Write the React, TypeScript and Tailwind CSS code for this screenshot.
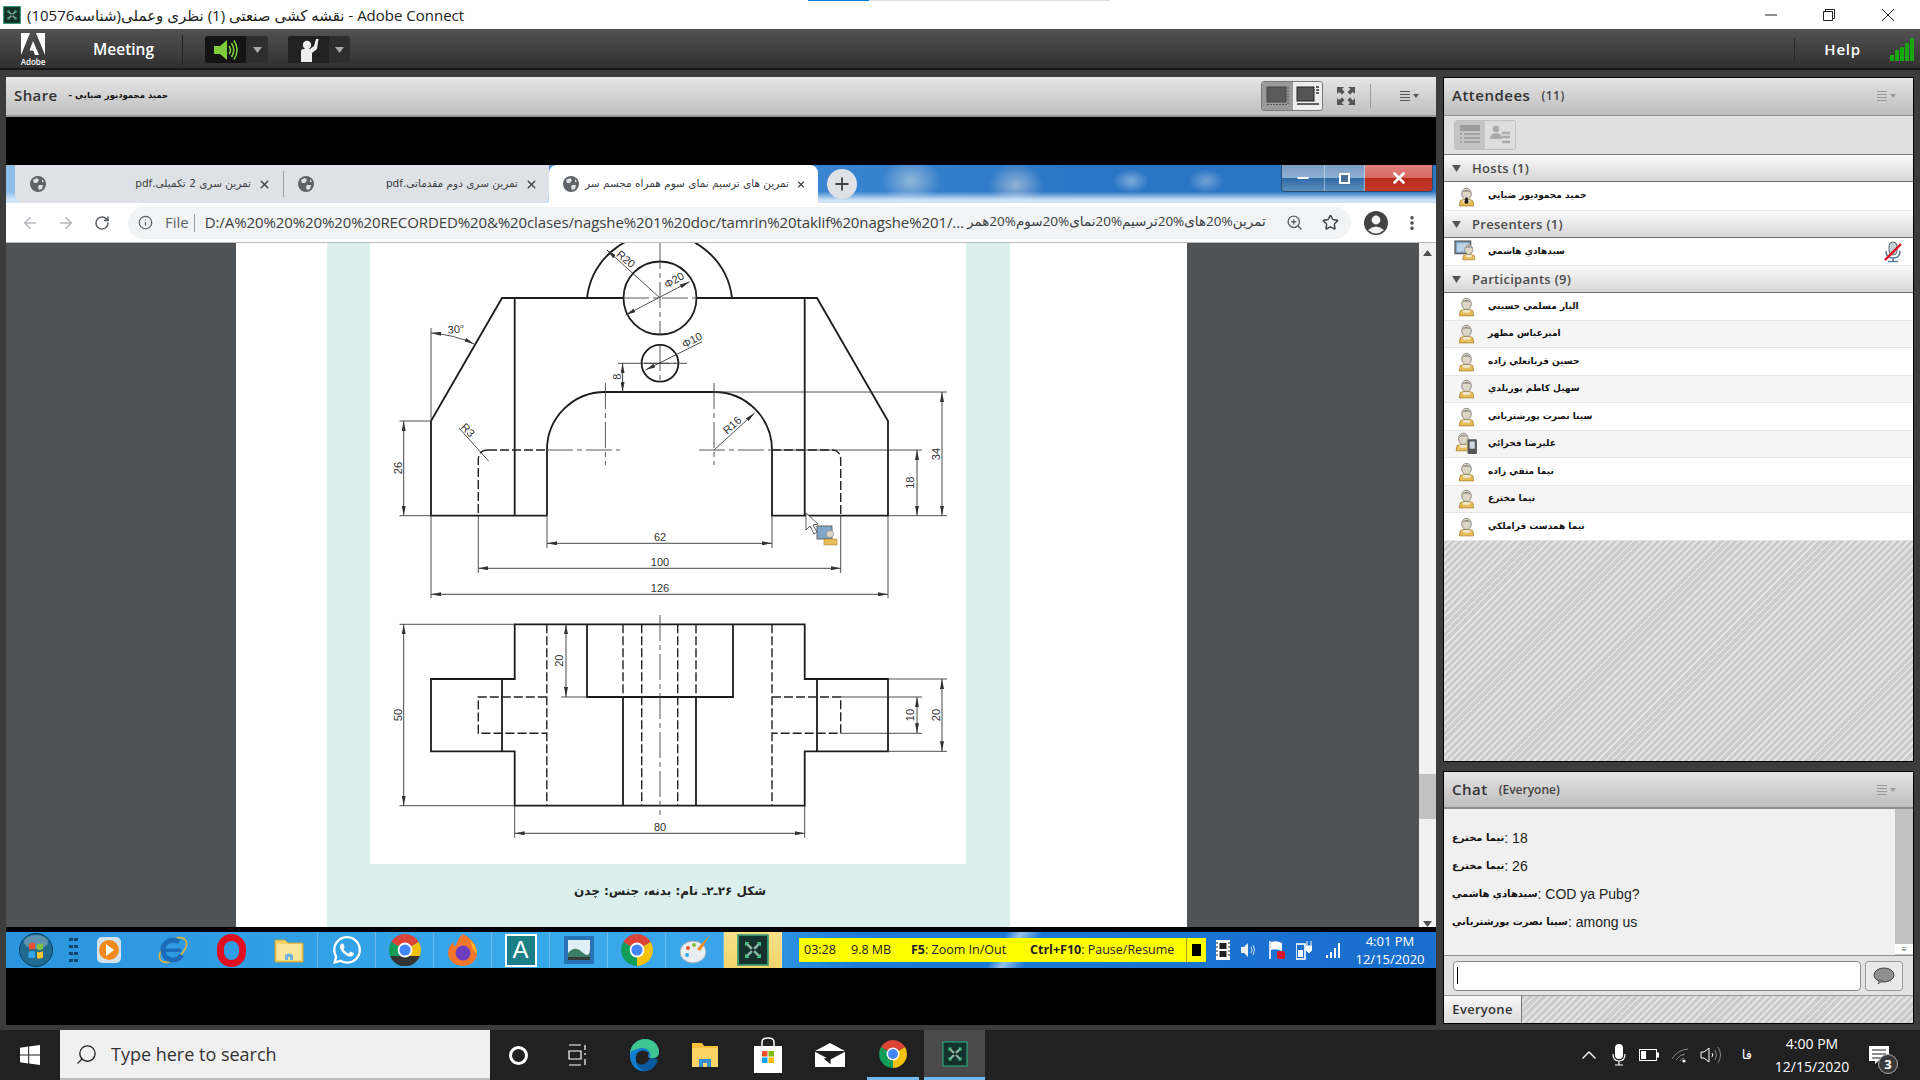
import React from "react";
import { FaWhatsapp } from "react-icons/fa";
import { ArrowLeft, ArrowRight, RotateCw, Info, ZoomIn, Star, X, Plus, ChevronUp, Search, MoreVertical, Minus } from "lucide-react";

const sans = "font-['Open_Sans','DejaVu_Sans',sans-serif]";
const ar = "font-['DejaVu_Sans',sans-serif]";
const arial = "font-['Liberation_Sans','DejaVu_Sans',sans-serif]";
const hatch = "bg-[repeating-linear-gradient(135deg,#cbcbcb_0,#cbcbcb_3px,#e4e4e4_3px,#e4e4e4_5px)]";

function Globe() {
  return (
    <svg width="16" height="16" viewBox="0 0 16 16" className="shrink-0">
      <circle cx="8" cy="8" r="8" fill="#5f6368" />
      <path d="M3 4 L7 2 L9 4 L7 7 L4 7 Z M9 9 L13 9 L12 13 L9 14 L8 11 Z M12 3 L14 6 L12 6 Z" fill="#dee1e6" />
    </svg>
  );
}

function MenuGlyph({ color = "#9a9a9a" }: { color?: string }) {
  return (
    <svg width="20" height="10" viewBox="0 0 20 10" className="shrink-0">
      <path d="M0 .5H10M0 3.5H10M0 6.5H10M0 9.5H10" stroke={color} strokeWidth="1" />
      <path d="M13 3H19L16 7Z" fill={color} />
    </svg>
  );
}

function Person({ kind = "user" }: { kind?: "user" | "host" | "presenter" | "mobile" }) {
  const body = (
    <g>
      <path d="M5 20 L6 15 Q12 12 18 15 L19 20 Z" fill="#e8bc57" stroke="#a37a28" strokeWidth=".7" />
      <path d="M8 15 Q12 13 16 15 L15 17 L9 17 Z" fill="#efe6d0" />
      <ellipse cx="12" cy="8.5" rx="4.6" ry="5.4" fill="#ddd6c6" stroke="#7d7a72" strokeWidth=".8" />
      <path d="M7.8 7 Q12 2 16.2 7 Q12 5.2 7.8 7" fill="#8f8a80" />
    </g>
  );
  if (kind === "host")
    return (
      <svg width="25" height="23" viewBox="0 0 24 22" className="shrink-0">
        {body}
        <path d="M11 12 L13 12 L13.5 17 L10.5 17Z" fill="#111" />
        <circle cx="12" cy="16" r="2" fill="#222" />
      </svg>
    );
  if (kind === "presenter")
    return (
      <svg width="25" height="23" viewBox="0 0 24 22" className="shrink-0">
        <rect x="1" y="1" width="15" height="12" fill="#7fa5c9" stroke="#555" strokeWidth="1.2" />
        <rect x="3" y="3" width="11" height="8" fill="#bcd5e8" />
        <g transform="translate(4 2) scale(.85)">{body}</g>
      </svg>
    );
  if (kind === "mobile")
    return (
      <svg width="25" height="23" viewBox="0 0 24 22" className="shrink-0">
        <g transform="translate(-3 -2)">{body}</g>
        <rect x="13" y="7" width="9" height="14" rx="1" fill="#555" />
        <rect x="15" y="9" width="5" height="7" fill="#cfd8de" />
      </svg>
    );
  return (
    <svg width="25" height="23" viewBox="0 0 24 22" className="shrink-0">
      {body}
    </svg>
  );
}

function Section({ label }: { label: string }) {
  return (
    <div className="flex h-[27px] shrink-0 items-center border-b border-[#6e6e6e] bg-[linear-gradient(180deg,#fafafa,#d6d6d6)] pl-[8px] pt-[1px]">
      <svg width="9" height="7" viewBox="0 0 9 7">
        <path d="M0 0H9L4.5 7Z" fill="#555" />
      </svg>
      <span className={`${sans} ml-[11px] text-[13px] font-semibold tracking-[0.3px] text-[#4a4a4a]`}>{label}</span>
    </div>
  );
}

function Row({ name, kind, alt, h = "h-[27.5px]", extra }: { name: string; kind?: "user" | "host" | "presenter" | "mobile"; alt?: boolean; h?: string; extra?: React.ReactNode }) {
  return (
    <div className={`flex ${h} shrink-0 items-center border-b border-[#e6e6e6] pl-[9.5px] pr-[10px] ${alt ? "bg-[#f5f5f5]" : "bg-white"}`}>
      <Person kind={kind} />
      <span className={`${ar} ml-[9.5px] text-[9px] font-bold text-[#111]`}>{name}</span>
      {extra && <span className="ml-auto">{extra}</span>}
    </div>
  );
}

function MutedMic() {
  return (
    <svg width="20" height="22" viewBox="0 0 20 22" className="block">
      <rect x="6" y="1" width="8" height="13" rx="4" fill="#c7d0d8" stroke="#5f6b75" />
      <path d="M3 10 Q3 17 10 17 Q17 17 17 10 M10 17V20M5 20.5H15" stroke="#5f7d9a" strokeWidth="1.6" fill="none" />
      <path d="M2 19 L18 3" stroke="#e01020" strokeWidth="2.4" />
    </svg>
  );
}

function Attendees() {
  const parts = [
    ["الیار مسلمي حسيني", "user"],
    ["امیرعباس مظهر", "user"],
    ["حسین قربانعلي زاده", "user"],
    ["سهيل كاظم پوربلدي", "user"],
    ["سینا نصرت پورشترباني", "user"],
    ["عليرضا فخرائي", "mobile"],
    ["نيما متقي زاده", "user"],
    ["نيما مخترع", "user"],
    ["نيما همدست قراملكي", "user"],
  ] as const;
  return (
    <section className="flex h-[685px] shrink-0 flex-col border border-black bg-[#e0e0e0]">
      <div className="flex h-[38px] shrink-0 items-center border-b border-[#8c8c8c] bg-[linear-gradient(180deg,#e4e4e4,#bdbdbd)] pb-[2px] pl-[8px] pr-[16px]">
        <span className={`${sans} text-[15px] font-semibold tracking-[0.5px] text-[#333]`}>Attendees</span>
        <span className={`${sans} ml-[11px] text-[12px] font-semibold tracking-[0.5px] text-[#444]`}>(11)</span>
        <span className="ml-auto">
          <MenuGlyph />
        </span>
      </div>
      <div className="flex h-[39px] shrink-0 items-center border-b border-[#777] bg-[#e0e0e0] pl-[10px]">
        <div className="flex h-[30px] w-[62px] overflow-hidden rounded-[3px] border border-[#c0c0c0]">
          <div className="flex w-[31px] items-center justify-center bg-[#c4c4c4]">
            <svg width="22" height="20" viewBox="0 0 22 20">
              <rect x="1" y="0" width="20" height="6" fill="#9c9c9c" />
              <path d="M1 9H3M5 9H21M1 13H3M5 13H21M1 17H3M5 17H21" stroke="#a3a3a3" strokeWidth="2" />
            </svg>
          </div>
          <div className="flex w-[31px] items-center justify-center bg-[#dedede]">
            <svg width="22" height="20" viewBox="0 0 22 20">
              <circle cx="7" cy="4" r="3.2" fill="#aaa" />
              <path d="M1 14 Q1 8 7 8 Q13 8 13 14Z" fill="#aaa" />
              <path d="M13 8H21M13 12H21M13 17H21" stroke="#aaa" strokeWidth="2.4" />
            </svg>
          </div>
        </div>
      </div>
      <Section label="Hosts (1)" />
      <Row name="حميد محموديور ضيايي" kind="host" h="h-[29px]" />
      <Section label="Presenters (1)" />
      <Row name="سيدهادي هاشمي" kind="presenter" h="h-[28px]" extra={<MutedMic />} />
      <Section label="Participants (9)" />
      {parts.map(([n, k], i) => (
        <Row key={n} name={n} kind={k} alt={i % 2 === 1} />
      ))}
      <div className={`flex-1 ${hatch}`} />
    </section>
  );
}

function ChatLine({ name, msg }: { name: string; msg: string }) {
  return (
    <div className={`${arial} flex h-[28px] items-center text-[14px] leading-none text-[#222]`}>
      <bdi className={`${ar} text-[10px] font-bold text-[#111]`}>{name}</bdi>
      <span>:&nbsp;{msg}</span>
    </div>
  );
}

function Chat() {
  return (
    <section className="flex h-[253px] shrink-0 flex-col border border-black bg-[#e0e0e0]">
      <div className="flex h-[37px] shrink-0 items-center border-b-2 border-[#8c8c8c] bg-[linear-gradient(180deg,#e4e4e4,#bdbdbd)] pl-[8px] pr-[16px]">
        <span className={`${sans} text-[15px] font-semibold tracking-[0.5px] text-[#333]`}>Chat</span>
        <span className={`${sans} ml-[11px] text-[12px] font-semibold text-[#444]`}>(Everyone)</span>
        <span className="ml-auto">
          <MenuGlyph />
        </span>
      </div>
      <div className="flex h-[147px] shrink-0 border-b border-[#8c8c8c] bg-[#f0f0f0]">
        <div className="flex-1 pl-[8px] pt-[15px]">
          <ChatLine name="نيما مخترع" msg="18" />
          <ChatLine name="نيما مخترع" msg="26" />
          <ChatLine name="سيدهادي هاشمي" msg="COD ya Pubg?" />
          <ChatLine name="سینا نصرت پورشترباني" msg="among us" />
        </div>
        <div className="flex w-[18px] flex-col justify-end bg-[#c2c2c2]">
          <div className="mb-[1px] flex h-[10px] items-center justify-center bg-white text-[8px] leading-none text-[#555]">≡</div>
        </div>
      </div>
      <div className="flex h-[40px] shrink-0 items-center border-b border-[#9a9a9a] bg-[#e2e2e2] pl-[9px] pr-[10px]">
        <div className="flex h-[30px] w-[409px] items-center rounded-[4px] border border-[#8a8a8a] bg-white pl-[3px]">
          <div className="h-[17px] w-[1px] bg-black" />
        </div>
        <div className="ml-[4px] flex h-[30px] w-[38px] items-center justify-center rounded-[3px] border border-[#9a9a9a] bg-[#eaeaea]">
          <svg width="22" height="18" viewBox="0 0 22 18">
            <ellipse cx="11" cy="8" rx="10" ry="7" fill="#8f8f8f" stroke="#444" />
            <path d="M6 13 L5 17 L10 14Z" fill="#8f8f8f" stroke="#444" strokeWidth=".6" />
          </svg>
        </div>
      </div>
      <div className={`flex flex-1 ${hatch}`}>
        <div className={`${sans} flex w-[78px] items-center justify-center border-r border-[#777] bg-[linear-gradient(180deg,#f8f8f8,#dcdcdc)] text-[13px] font-semibold tracking-[0.3px] text-[#333]`}>Everyone</div>
      </div>
    </section>
  );
}

function Dim({ x1, y1, x2, y2 }: { x1: number; y1: number; x2: number; y2: number }) {
  return <line x1={x1} y1={y1} x2={x2} y2={y2} markerStart="url(#arr)" markerEnd="url(#arr)" stroke="#333" strokeWidth=".9" />;
}

function T({ x, y, r = 0, children }: { x: number; y: number; r?: number; children: React.ReactNode }) {
  return (
    <text x={x} y={y} transform={r ? `rotate(${r} ${x} ${y})` : undefined} textAnchor="middle" dominantBaseline="central" fontSize="11" fontFamily="'Liberation Sans',sans-serif" fill="#333">
      {children}
    </text>
  );
}

function Drawing() {
  const thick = { stroke: "#1c1c1c", strokeWidth: 1.8, fill: "none" };
  const thin = { stroke: "#3c3c3c", strokeWidth: 0.9, fill: "none" };
  const dash = { stroke: "#222", strokeWidth: 1.4, fill: "none", strokeDasharray: "9 3" };
  const center = { stroke: "#444", strokeWidth: 0.9, fill: "none", strokeDasharray: "26 4 5 4" };
  return (
    <svg width="596" height="621" viewBox="370 243 596 621" className="block">
      <defs>
        <marker id="arr" viewBox="0 0 10 4" refX="10" refY="2" markerWidth="10" markerHeight="4" orient="auto-start-reverse" markerUnits="userSpaceOnUse">
          <path d="M0 0L10 2L0 4Z" fill="#333" />
        </marker>
      </defs>
      {/* top view */}
      <path d="M587 298 A73 73 0 0 1 732 298" {...thick} />
      <circle cx="660" cy="298" r="36.5" {...thick} />
      <circle cx="660" cy="363.3" r="18.4" {...thick} />
      <path d="M547 515.7H431V421L502 298H623M697 298H817L888 421V515.7H772V450A58 58 0 0 0 714 392H605A58 58 0 0 0 547 450V515.7" {...thick} />
      <path d="M514.7 298V515.7M804.7 298V515.7" {...thick} />
      <path d="M399.5 515.7H431M888 515.7H947M399.5 421H431M714 392H947M772 450H922M618 363.3H687" {...thin} />
      <path d="M431 328V421M431 515.7V598M888 515.7V598M478.3 515.7V573M840.7 515.7V573M547 515.7V548M772 515.7V548" {...thin} />
      <path d="M488 450H547M772 450H831Q840.7 450 840.7 460V515.7M488 450Q478.3 450 478.3 460V515.7" {...dash} />
      <path d="M547 450H620M699 450H772M605.4 383V465M714 383V465M660 243V335M660 345V382M623 298H697M644 363.3H676" {...center} />
      <Dim x1={403.7} y1={421} x2={403.7} y2={515.7} />
      <Dim x1={917} y1={450} x2={917} y2={515.7} />
      <Dim x1={942} y1={392} x2={942} y2={515.7} />
      <Dim x1={622.6} y1={363.3} x2={622.6} y2={392} />
      <Dim x1={547} y1={543.3} x2={772} y2={543.3} />
      <Dim x1={478.3} y1={568.3} x2={840.7} y2={568.3} />
      <Dim x1={431} y1={594.3} x2={888} y2={594.3} />
      <path d="M431 333Q456 335 474 344" {...thin} markerStart="url(#arr)" markerEnd="url(#arr)" />
      <line x1="607" y1="250" x2="660" y2="298" {...thin} markerStart="url(#arr)" />
      <line x1="625.6" y1="315" x2="689.6" y2="281.7" {...thin} markerStart="url(#arr)" markerEnd="url(#arr)" />
      <line x1="645.5" y1="370" x2="702" y2="341.7" {...thin} markerStart="url(#arr)" />
      <line x1="714" y1="450" x2="754.6" y2="413" {...thin} markerEnd="url(#arr)" />
      <line x1="459" y1="428" x2="488.6" y2="461" {...thin} />
      <T x={626} y={259} r={40}>R20</T>
      <T x={674} y={280} r={-30}>Φ20</T>
      <T x={692} y={340} r={-28}>Φ10</T>
      <T x={732} y={425} r={-42}>R16</T>
      <T x={468} y={430} r={45}>R3</T>
      <T x={456} y={329} r={-5}>30°</T>
      <T x={660} y={537}>62</T>
      <T x={660} y={562}>100</T>
      <T x={660} y={587.7}>126</T>
      <T x={397.5} y={468} r={-90}>26</T>
      <T x={909.6} y={482.7} r={-90}>18</T>
      <T x={935.6} y={454} r={-90}>34</T>
      <T x={617} y={376.7} r={-90}>8</T>
      {/* front view */}
      <path d="M514.7 624.3H804.7V679H888V751.3H804.7V805.7H514.7V751.3H431V679H514.7Z" {...thick} />
      <path d="M502 679V751.3M817 679V751.3M587 624.3V697H733V624.3M623 697V805.7M696 697V805.7" {...thick} />
      <path d="M546.8 624.3V805.7M772 624.3V805.7M641.7 624.3V805.7M677.7 624.3V805.7M623 624.3V697M696 624.3V697M546.8 697H478.3V733.3H546.8M772 697H840.7V733.3H772" {...dash} />
      <path d="M660 615V815" {...center} />
      <path d="M399.5 624.3H514.7M399.5 805.7H514.7M561 697H587M840.7 697H922M840.7 733.3H922M888 679H947M888 751.3H947M514.7 805.7V837.7M804.7 805.7V837.7" {...thin} />
      <Dim x1={403.7} y1={624.3} x2={403.7} y2={805.7} />
      <Dim x1={566} y1={624.3} x2={566} y2={697} />
      <Dim x1={917} y1={697} x2={917} y2={733.3} />
      <Dim x1={942} y1={679} x2={942} y2={751.3} />
      <Dim x1={514.7} y1={833.3} x2={804.7} y2={833.3} />
      <T x={397.5} y={715} r={-90}>50</T>
      <T x={559.4} y={660.7} r={-90}>20</T>
      <T x={909.6} y={715} r={-90}>10</T>
      <T x={935.6} y={715} r={-90}>20</T>
      <T x={660} y={826.7}>80</T>
      {/* shared cursor */}
      <path d="M806 513V530L810 526L814 534L817 532L813 525L818 524Z" fill="#fff" stroke="#333" strokeWidth=".8" />
      <rect x="817" y="526" width="15" height="13" fill="#7fa5c9" stroke="#666" />
      <circle cx="830" cy="534" r="3.6" fill="#ddd6c6" stroke="#777" strokeWidth=".5" />
      <rect x="824" y="539" width="13" height="6" fill="#e8bc57" stroke="#a37a28" strokeWidth=".5" />
    </svg>
  );
}

function ChromeIcon({ size = 30, beta }: { size?: number; beta?: boolean }) {
  return (
    <svg width={size} height={size} viewBox="0 0 32 32" className="shrink-0">
      <path d="M16 16 L2.2 8 A16 16 0 0 1 29.8 8 Z" fill="#db4437" />
      <path d="M16 16 L29.8 8 A16 16 0 0 1 16 32 Z" fill="#f4c20d" />
      <path d="M16 16 L16 32 A16 16 0 0 1 2.2 8 Z" fill="#0f9d58" />
      {beta && <path d="M1 22 A16 16 0 0 0 31 22 Z" fill="#333" />}
      <circle cx="16" cy="16" r="7.4" fill="#fff" />
      <circle cx="16" cy="16" r="5.6" fill="#4285f4" />
    </svg>
  );
}

function CamtasiaIcon({ size = 28 }: { size?: number }) {
  return (
    <svg width={size} height={size} viewBox="0 0 28 28" className="shrink-0">
      <rect x="1" y="1" width="26" height="26" fill="#14322b" stroke="#2f8f6f" strokeWidth="1.6" />
      <path d="M8 8L13 13M20 8L15 13M8 20L13 15M20 20L15 15" stroke="#8fb7a9" strokeWidth="2.2" />
      <path d="M7 7H11L7 11ZM21 7V11L17 7ZM7 21V17L11 21ZM21 21H17L21 17Z" fill="#3fbf7f" />
    </svg>
  );
}

function Slot({ children, hl }: { children: React.ReactNode; hl?: boolean }) {
  return <div className={`flex h-full w-[58px] shrink-0 items-center justify-center border-r border-[#ffffff40] ${hl ? "bg-[linear-gradient(180deg,#f7e089,#f1d56c)]" : ""}`}>{children}</div>;
}

function Win7Bar() {
  return (
    <div className="flex h-[36px] shrink-0 items-center bg-[linear-gradient(120deg,transparent_69%,rgba(255,255,255,0.55)_70%,transparent_71.5%),linear-gradient(90deg,#2b94de_0%,#39aaec_40%,#3aa4ea_50%,#1c7ad8_60%,#1a6ecc_100%)]">
      <div className="flex w-[60px] shrink-0 items-center justify-center">
        <svg width="34" height="34" viewBox="0 0 34 34">
          <circle cx="17" cy="17" r="16.5" fill="#1f6a8f" stroke="#0d3f5c" />
          <ellipse cx="17" cy="9" rx="12" ry="7" fill="#ffffff" opacity=".28" />
          <path d="M10 11Q13 9 16 10V16.5Q13 15.5 10 17Z" fill="#e8502e" />
          <path d="M18 10.5Q21 12 24 10V16Q21 18 18 16.5Z" fill="#7fc242" />
          <path d="M9.5 19Q13 17.5 16 18.5V25Q13 24 9.5 25Z" fill="#35a6e8" />
          <path d="M18 18.5Q21 20 24 18V24.5Q21 26.5 18 25Z" fill="#f7c52d" />
        </svg>
      </div>
      <div className="grid w-[14px] shrink-0 grid-cols-2 justify-items-center gap-y-[4px] px-[2px]">
        {[0, 1, 2, 3, 4, 5, 6, 7].map((i) => (
          <div key={i} className="h-[3px] w-[4px] bg-[#12466f]" />
        ))}
      </div>
      <div className="flex w-[58px] shrink-0 items-center justify-center">
        <svg width="26" height="28" viewBox="0 0 26 28">
          <rect x="1" y="1" width="24" height="26" rx="5" fill="#f0f0f0" opacity=".85" />
          <circle cx="13" cy="14" r="10" fill="#f08a1d" />
          <path d="M10 8L18 14L10 20Z" fill="#fff" />
        </svg>
      </div>
      <div className="w-[6px] shrink-0" />
      <div className="flex w-[58px] shrink-0 items-center justify-center">
        <svg width="34" height="34" viewBox="0 0 34 34">
          <ellipse cx="17" cy="17" rx="16" ry="9" transform="rotate(-40 17 17)" fill="none" stroke="#e2b33a" strokeWidth="1.6" />
          <circle cx="17" cy="17" r="10" fill="none" stroke="#1b6bb8" strokeWidth="5" strokeDasharray="48 15" transform="rotate(30 17 17)" />
          <rect x="9" y="15.5" width="16" height="3.4" fill="#1b6bb8" />
        </svg>
      </div>
      <div className="flex w-[58px] shrink-0 items-center justify-center">
        <div className="h-[33px] w-[29px] rounded-full border-[7px] border-[#e01020]" />
      </div>
      <Slot>
        <svg width="32" height="32" viewBox="0 0 32 32">
          <path d="M2 6H12L15 9H30V28H2Z" fill="#f6d46c" stroke="#c9a23d" />
          <rect x="4" y="10" width="24" height="16" fill="#f9e69a" />
          <path d="M12 26V21Q16 18 20 21V26H17V23H15V26Z" fill="#6fb4dc" />
        </svg>
      </Slot>
      <Slot>
        <FaWhatsapp size={32} className="text-white" />
      </Slot>
      <Slot>
        <ChromeIcon size={32} beta />
      </Slot>
      <Slot>
        <svg width="32" height="34" viewBox="0 0 32 34">
          <path d="M16 1C22 4 31 11 30 21C29 29 23 33 16 33C8 33 2 28 1 21C1 16 3 12 6 9C6 12 8 13 9 13C10 8 12 4 16 1Z" fill="#f6762c" />
          <circle cx="16" cy="20" r="7.5" fill="#6d3fc0" />
          <path d="M23 7C28 12 30 17 30 21L26 16Z" fill="#ffbd2e" />
        </svg>
      </Slot>
      <Slot>
        <div className="flex h-[33px] w-[32px] items-center justify-center border-2 border-white bg-[#1a7f86]">
          <span className="font-['Liberation_Sans',sans-serif] text-[24px] leading-none text-white">A</span>
        </div>
      </Slot>
      <Slot>
        <svg width="32" height="30" viewBox="0 0 32 30">
          <rect x="1" y="1" width="30" height="28" fill="#2873b8" />
          <rect x="5" y="5" width="22" height="20" fill="#dfeff5" />
          <path d="M5 18Q12 10 19 17T27 15V25H5Z" fill="#3d7f66" />
          <rect x="5" y="22" width="22" height="3" fill="#3a3a3a" />
        </svg>
      </Slot>
      <Slot>
        <ChromeIcon size={32} />
      </Slot>
      <Slot>
        <svg width="34" height="32" viewBox="0 0 34 32">
          <ellipse cx="15" cy="18" rx="13" ry="11" fill="#e8eef2" stroke="#9aa8b0" />
          <circle cx="10" cy="14" r="2" fill="#e8502e" />
          <circle cx="16" cy="11" r="2" fill="#7fc242" />
          <circle cx="9" cy="21" r="2" fill="#35a6e8" />
          <path d="M32 1L22 17L19 15Z" fill="#f08a1d" />
        </svg>
      </Slot>
      <Slot hl>
        <CamtasiaIcon size={32} />
      </Slot>
      <div className="ml-[17px] flex h-[24px] w-[407px] shrink-0 items-center bg-[#ffff00] pl-[5px] font-['Open_Sans',sans-serif] text-[12.5px] leading-none text-[#222]">
        <span className="w-[47px]">03:28</span>
        <span className="w-[60px]">9.8 MB</span>
        <span className="w-[119px]">
          <b>F5</b>: Zoom In/Out
        </span>
        <span className="w-[156px]">
          <b>Ctrl+F10</b>: Pause/Resume
        </span>
        <span className="h-full w-[1px] bg-[#a8a800]" />
        <span className="ml-[5px] h-[12px] w-[9px] bg-black" />
      </div>
      <div className="ml-[10px] flex items-center gap-[10px]">
        <svg width="14" height="20" viewBox="0 0 14 20">
          <rect width="14" height="20" fill="#fff" />
          <rect x="3.5" y="3" width="7" height="6" fill="#222" />
          <rect x="3.5" y="11" width="7" height="6" fill="#222" />
          <path d="M0 3H2M0 7H2M0 11H2M0 15H2M12 3H14M12 7H14M12 11H14M12 15H14" stroke="#222" />
        </svg>
        <svg width="18" height="18" viewBox="0 0 18 18">
          <path d="M1 6H4L8 2V16L4 12H1Z" fill="#eee" />
          <path d="M11 6Q13 9 11 12M13 4Q16 9 13 14" stroke="#cfe2f5" fill="none" />
        </svg>
        <svg width="18" height="20" viewBox="0 0 18 20">
          <path d="M2 1V19" stroke="#fff" strokeWidth="1.6" />
          <path d="M3 2Q8 0 14 3V11Q8 8 3 10Z" fill="#fff" />
          <rect x="9" y="11" width="8" height="8" rx="2" fill="#d8192a" />
        </svg>
        <svg width="16" height="20" viewBox="0 0 16 20">
          <rect x="0" y="4" width="9" height="15" fill="none" stroke="#fff" strokeWidth="1.6" />
          <rect x="2" y="10" width="5" height="7" fill="#fff" />
          <path d="M11 1V6M15 1V6M10 6H16V10L13 13L10 10Z" stroke="#fff" fill="#fff" />
        </svg>
        <svg width="16" height="16" viewBox="0 0 16 16" className="ml-[3px]">
          <path d="M1 13V16H3V13ZM5 10V16H7V10ZM9 6V16H11V6ZM13 1V16H15V1Z" fill="#fff" />
        </svg>
      </div>
      <div className="ml-[4px] flex w-[90px] shrink-0 flex-col items-center font-['Open_Sans',sans-serif] text-[13px] leading-[18px] text-white">
        <span>4:01 PM</span>
        <span>12/15/2020</span>
      </div>
    </div>
  );
}

function ChromeWindow() {
  return (
    <div className="flex flex-col">
      <div className="flex h-[38px] items-stretch bg-[linear-gradient(180deg,transparent_70%,rgba(214,231,248,0.95)_92%),radial-gradient(ellipse_30px_24px_at_905px_16px,rgba(165,195,220,0.8),transparent),radial-gradient(ellipse_28px_22px_at_1010px_20px,rgba(170,190,215,0.8),transparent),radial-gradient(ellipse_18px_12px_at_1125px_16px,rgba(160,195,225,0.7),transparent),radial-gradient(ellipse_18px_12px_at_1200px_16px,rgba(160,195,225,0.6),transparent),linear-gradient(90deg,#8dbde8_0,#3c87d2_55%,#2b75c6_75%,#2a74c4_100%)]">
        <div className="w-[9px] shrink-0" />
        <div className={`${ar} flex w-[534px] shrink-0 rounded-bl-[8px] rounded-br-[8px] bg-[#dee1e6] text-[10.5px] text-[#3c4043]`}>
          <div className="flex w-[268px] items-center pl-[15px] pr-[12px]">
            <Globe />
            <span dir="rtl" className="ml-auto mr-[7px]">تمرین سری 2 تکمیلی.pdf</span>
            <X size={13} strokeWidth={2.6} />
          </div>
          <div className="my-[6px] w-[1px] bg-[#9aa0a6]" />
          <div className="flex flex-1 items-center pl-[14px] pr-[11px]">
            <Globe />
            <span dir="rtl" className="ml-auto mr-[7px]">تمرین سری دوم مقدماتی.pdf</span>
            <X size={13} strokeWidth={2.6} />
          </div>
        </div>
        <div className={`${ar} flex w-[269px] shrink-0 items-center rounded-t-[8px] bg-white pl-[14px] pr-[12px] text-[10.5px] text-[#3c4043]`}>
          <Globe />
          <span dir="rtl" className="ml-[6px] mr-[7px] flex-1 whitespace-nowrap text-right">تمرین های ترسیم نمای سوم همراه مجسم سر</span>
          <X size={13} strokeWidth={2.6} />
        </div>
        <div className="flex w-[463px] shrink-0 items-start pl-[9px] pt-[4px]">
          <div className="flex h-[30px] w-[30px] items-center justify-center rounded-full bg-[#dee1e6]">
            <Plus size={20} strokeWidth={2.2} className="text-[#3c4043]" />
          </div>
        </div>
        <div className="flex h-[27px] w-[152px] shrink-0 overflow-hidden rounded-b-[4px] border border-t-0 border-[#2c4a6a]">
          <div className="flex w-[43px] items-center justify-center border-r border-[#ffffff66] bg-[linear-gradient(180deg,#7a9dc4_0,#8eb0d2_50%,#2f6aa8_51%,#5b8fbc_100%)]">
            <Minus size={16} strokeWidth={3} className="text-white" />
          </div>
          <div className="flex w-[40px] items-center justify-center border-r border-[#ffffff66] bg-[linear-gradient(180deg,#7a9dc4_0,#8eb0d2_50%,#2f6aa8_51%,#5b8fbc_100%)]">
            <div className="h-[11px] w-[11px] border-2 border-white bg-[#4a6f94]" />
          </div>
          <div className="flex flex-1 items-center justify-center bg-[linear-gradient(180deg,#e0807a_0,#d66a62_50%,#b9281b_51%,#c53a2c_100%)]">
            <X size={18} strokeWidth={3.6} className="text-white" />
          </div>
        </div>
      </div>
      <div className="flex h-[40px] items-center border-b border-[#bbb] bg-white">
        <ArrowLeft size={18} className="ml-[15px] text-[#b4b7ba]" />
        <ArrowRight size={18} className="ml-[18px] text-[#b4b7ba]" />
        <RotateCw size={16} className="ml-[19px] text-[#5f6368]" strokeWidth={2.4} />
        <div className="ml-[18px] flex h-[32px] w-[1223px] shrink-0 items-center rounded-full bg-[#f1f3f4] pl-[10px] pr-[12px]">
          <Info size={15} className="text-[#5f6368]" />
          <span className="ml-[12px] font-['Open_Sans',sans-serif] text-[15px] text-[#5f6368]">File</span>
          <span className="ml-[5px] h-[18px] w-[1px] bg-[#9aa0a6]" />
          <span className="ml-[10px] flex w-[1061px] shrink-0 justify-between overflow-hidden whitespace-nowrap font-['Open_Sans','DejaVu_Sans',sans-serif] text-[15px] tracking-[-0.1px] text-[#3c4043]">
            <span>D:/A%20%20%20%20%20RECORDED%20&amp;%20clases/nagshe%201%20doc/tamrin%20taklif%20nagshe%201/...</span>
            <span dir="rtl" className="text-[13.5px] tracking-[-0.6px]">تمرین%20های%20ترسیم%20نمای%20سوم%20همر</span>
          </span>
          <ZoomIn size={17} className="ml-auto text-[#5f6368]" />
          <Star size={17} className="ml-[19px] text-[#3c4043]" />
        </div>
        <svg width="24" height="24" viewBox="0 0 24 24" className="ml-[13px] shrink-0">
          <circle cx="12" cy="12" r="12" fill="#444" />
          <circle cx="12" cy="9" r="4.4" fill="#f1f3f4" />
          <path d="M4 19Q12 12 20 19Q12 26 4 19" fill="#f1f3f4" />
        </svg>
        <MoreVertical size={18} className="ml-[15px] shrink-0 text-[#444]" strokeWidth={2.6} />
      </div>
      <div className="flex h-[684px] items-stretch overflow-hidden bg-[#505356]">
        <div className="ml-[230px] h-full w-[951px] shrink-0 bg-white pl-[91px]">
          <div className="h-full w-[683px] bg-[#dbefed] pl-[43px]">
            <div className="h-[621px] w-[596px] bg-white">
              <Drawing />
            </div>
            <div className={`${ar} flex h-[63px] w-[596px] items-center justify-center pb-[9px] pl-[4px] text-[12px] font-bold text-[#222]`} dir="rtl">
              شکل ۲۶ـ۲ـ نام: بدنه، جنس: چدن
            </div>
          </div>
        </div>
        <div className="w-[232px] shrink-0" />
        <div className="flex w-[17px] shrink-0 flex-col items-center bg-[#f1f1f1]">
          <svg width="9" height="6" viewBox="0 0 9 6" className="mt-[7px]">
            <path d="M0 6H9L4.5 0Z" fill="#505050" />
          </svg>
          <div className="mt-[518px] h-[45px] w-full bg-[#c1c1c1]" />
          <svg width="9" height="6" viewBox="0 0 9 6" className="mt-[102px]">
            <path d="M0 0H9L4.5 6Z" fill="#505050" />
          </svg>
        </div>
      </div>
    </div>
  );
}

function SharePod() {
  return (
    <section className="flex h-[948px] w-[1430px] shrink-0 flex-col bg-black">
      <div className="flex h-[40px] shrink-0 items-center border-b-2 border-[#999] bg-[linear-gradient(180deg,#e6e6e6,#bfbfbf)] pl-[8px] pr-[16px]">
        <span className={`${sans} pb-[2px] text-[15px] font-semibold tracking-[0.4px] text-[#333]`}>Share</span>
        <span className={`${ar} ml-[11px] pb-[2px] text-[8.5px] font-bold text-[#111]`}>- حميد محموديور ضيايي</span>
        <div className="ml-auto flex h-[30px] w-[62px] overflow-hidden rounded-[3px] border border-[#777]">
          <div className="flex w-[31px] items-center justify-center bg-[#9a9a9a]">
            <svg width="24" height="20" viewBox="0 0 24 20">
              <rect x="1" y="1" width="19" height="15" fill="#5a5a5a" stroke="#444" />
              <path d="M1 18.5H22M22 1V18" stroke="#555" strokeDasharray="2 1" />
            </svg>
          </div>
          <div className="flex flex-1 items-center justify-center bg-[#eee]">
            <svg width="24" height="20" viewBox="0 0 24 20">
              <rect x="1" y="1" width="17" height="14" fill="#555" stroke="#222" />
              <path d="M20 1H23M20 4H23M20 7H23M1 18H23" stroke="#333" strokeWidth="1.4" />
            </svg>
          </div>
        </div>
        <svg width="20" height="20" viewBox="0 0 20 20" className="ml-[13px]">
          <path d="M1 1H8L6 3L8.5 6L6 8.5L3 6L1 8ZM19 1V8L17 6L14 8.5L11.5 6L14.5 3L12 1ZM1 19V12L3 14L6 11.5L8.5 14L5.5 17L8 19ZM19 19H12L14 17L11.5 14L14 11.5L17 14.5L19 12Z" fill="#555" />
        </svg>
        <div className="ml-[14px] h-[24px] w-[1px] bg-[#999]" />
        <span className="ml-[29px]">
          <MenuGlyph color="#555" />
        </span>
      </div>
      <div className="h-[48px] shrink-0" />
      <ChromeWindow />
      <div className="h-[5px] shrink-0" />
      <Win7Bar />
    </section>
  );
}

function TopBar() {
  return (
    <>
      <div className="flex h-[29px] shrink-0 flex-col bg-white">
        <div className="flex h-[1px] shrink-0">
          <div className="ml-[808px] w-[61px] bg-[#0078d7]" />
          <div className="w-[241px] bg-[#dddddd]" />
        </div>
        <div className="flex flex-1 items-center pl-[3px]">
          <CamtasiaIcon size={18} />
          <span dir="ltr" className="ml-[6px] font-['Open_Sans','DejaVu_Sans',sans-serif] text-[15px] leading-none text-[#222]">
            نقشه کشی صنعتی (1) نظری وعملی(شناسه10576) - Adobe Connect
          </span>
          <svg width="12" height="2" viewBox="0 0 12 2" className="ml-auto">
            <path d="M0 1H12" stroke="#222" />
          </svg>
          <svg width="12" height="12" viewBox="0 0 12 12" className="ml-[46px]">
            <path d="M2.5 2.5V.5H11.5V9.5H9.5M.5 2.5H9.5V11.5H.5Z" stroke="#222" fill="none" />
          </svg>
          <svg width="12" height="12" viewBox="0 0 12 12" className="ml-[47px] mr-[26px]">
            <path d="M0 0L12 12M12 0L0 12" stroke="#222" />
          </svg>
        </div>
      </div>
      <div className="flex h-[41px] shrink-0 items-center border-b-2 border-[#161616] bg-[linear-gradient(180deg,#525252,#303030)] pt-[2px]">
        <div className="ml-[20px] flex w-[26px] shrink-0 flex-col items-center">
          <svg width="24" height="24" viewBox="0 0 24 24">
            <path d="M0 0H9L0 22Z M15 0H24V22Z" fill="#fff" />
            <path d="M12 8L18 22H14L12.3 17.5H8.5Z" fill="#fff" />
          </svg>
          <span className={`${sans} text-[8px] font-semibold leading-[9px] text-white`}>Adobe</span>
        </div>
        <span className={`${sans} ml-[47px] text-[15.5px] font-semibold text-white`}>Meeting</span>
        <div className="ml-[28px] h-[30px] w-[1px] bg-[#222]" />
        <div className="ml-[22px] flex h-[27px] w-[63px] overflow-hidden rounded-[3px] bg-[#2e2e2e]">
          <div className="flex w-[41px] items-center justify-center bg-[#141414]">
            <svg width="26" height="22" viewBox="0 0 26 22">
              <path d="M1 7H7L14 1V21L7 15H1Z" fill="#7ecb3c" />
              <path d="M16 7Q19 11 16 15M18.5 4Q23 11 18.5 18M21 1.5Q27 11 21 20.5" stroke="#7ecb3c" strokeWidth="1.6" fill="none" />
            </svg>
          </div>
          <div className="flex flex-1 items-center justify-center">
            <svg width="9" height="6" viewBox="0 0 9 6">
              <path d="M0 0H9L4.5 6Z" fill="#aaa" />
            </svg>
          </div>
        </div>
        <div className="ml-[20px] flex h-[27px] w-[62px] overflow-hidden rounded-[3px] bg-[#2e2e2e]">
          <div className="flex w-[41px] items-center justify-center bg-[#222]">
            <svg width="22" height="24" viewBox="0 0 22 24">
              <circle cx="9" cy="7" r="4.2" fill="#eee" />
              <path d="M3 24V13Q3 11 6 11H12L16 8L18 1H20.5L19 11L14 15V24Z" fill="#eee" />
            </svg>
          </div>
          <div className="flex flex-1 items-center justify-center">
            <svg width="9" height="6" viewBox="0 0 9 6">
              <path d="M0 0H9L4.5 6Z" fill="#aaa" />
            </svg>
          </div>
        </div>
        <div className="ml-auto h-[24px] w-[1px] bg-[#2a2a2a]" />
        <span className={`${sans} ml-[29px] text-[15px] font-semibold tracking-[0.8px] text-white`}>Help</span>
        <svg width="24" height="23" viewBox="0 0 24 23" className="ml-[29px] mr-[6px]">
          <path d="M0 17H4V23H0ZM5 12H9V23H5ZM10 9H14V23H10ZM15 5H19V23H15ZM20 0H24V23H20Z" fill="#17a80e" />
        </svg>
      </div>
    </>
  );
}

function Win10Bar() {
  return (
    <div className="flex h-[50px] shrink-0 items-center bg-[#212121]">
      <div className="flex w-[60px] shrink-0 justify-center">
        <svg width="20" height="20" viewBox="0 0 20 20">
          <path d="M0 2.8L8.2 1.6V9.5H0ZM9.2 1.4L20 0V9.5H9.2ZM0 10.5H8.2V18.4L0 17.2ZM9.2 10.5H20V20L9.2 18.6Z" fill="#fff" />
        </svg>
      </div>
      <div className="flex h-full w-[430px] shrink-0 items-center border-b-2 border-[#bbb] bg-[#f0f0f0] pl-[15px]">
        <Search size={23} strokeWidth={1.4} className="-scale-x-100 text-[#222]" />
        <span className="ml-[13px] font-['Open_Sans',sans-serif] text-[18px] text-[#333]">Type here to search</span>
      </div>
      <div className="ml-[19px] h-[19px] w-[19px] shrink-0 rounded-full border-[3px] border-white" />
      <svg width="20" height="22" viewBox="0 0 20 22" className="ml-[40px] shrink-0">
        <path d="M1 1H13M1 21H13M1 7H13V15H1ZM17 1V6M17 9V11M17 15V21" stroke="#fff" strokeWidth="1.2" fill="none" />
      </svg>
      <svg width="32" height="34" viewBox="0 0 32 34" className="ml-[40px] shrink-0">
        <path d="M2 15C3 6 10 1 17 1C26 1 31 8 31 14C31 20 25 21 22 20C19 19 20 17 21 15C17 10 6 12 8 23C9 28 14 33 19 33C8 35 1 26 2 15Z" fill="#0f7fd1" />
        <path d="M2 15C3 6 10 1 17 1C26 1 31 8 31 14C31 20 25 21 22 20C24 15 20 9 13 10C8 11 3 13 2 15Z" fill="#3fc58f" />
        <path d="M22 20C25 21 29 20 30 22C27 30 22 33 18 33C13 33 9 28 8 23C10 28 18 28 22 20Z" fill="#0a5aa0" />
      </svg>
      <svg width="28" height="26" viewBox="0 0 28 26" className="ml-[31px] shrink-0">
        <path d="M1 1H11L13 4H27V25H1Z" fill="#f7c13a" />
        <rect x="1" y="6" width="26" height="19" fill="#fcd466" />
        <path d="M8 25V17H20V25H16V21H12V25Z" fill="#3a8fd6" />
      </svg>
      <svg width="30" height="36" viewBox="0 0 30 36" className="ml-[34px] shrink-0">
        <path d="M1 9H29V36H1Z" fill="#fff" />
        <path d="M9 9V5Q9 1 15 1Q21 1 21 5V9" stroke="#fff" strokeWidth="1.5" fill="none" />
        <rect x="9" y="14" width="5.5" height="5.5" fill="#f25022" />
        <rect x="15.5" y="14" width="5.5" height="5.5" fill="#7fba00" />
        <rect x="9" y="20.5" width="5.5" height="5.5" fill="#00a4ef" />
        <rect x="15.5" y="20.5" width="5.5" height="5.5" fill="#ffb900" />
      </svg>
      <svg width="30" height="24" viewBox="0 0 30 24" className="ml-[32px] shrink-0">
        <path d="M0 8L15 0L30 8V24H0Z" fill="#fff" />
        <path d="M0 8L15 16L30 8M15 16L22 12L10 16L15 20Z" stroke="#212121" strokeWidth="1.2" fill="#212121" />
      </svg>
      <div className="ml-[22px] flex h-full w-[52px] shrink-0 items-center justify-center border-b-[3px] border-[#76b9ed]">
        <ChromeIcon size={28} />
      </div>
      <div className="ml-[5px] flex h-full w-[61px] shrink-0 items-center justify-center border-b-[3px] border-[#76b9ed] bg-[#4a4a4a]">
        <CamtasiaIcon size={26} />
      </div>
      <div className="flex flex-1 items-center justify-end">
        <ChevronUp size={24} strokeWidth={1.4} className="text-white" />
        <svg width="14" height="22" viewBox="0 0 14 22" className="ml-[11px]">
          <rect x="3" y="0" width="8" height="15" rx="4" fill="#fff" />
          <path d="M1 10Q1 17 7 17Q13 17 13 10M7 17V21M3 21H11" stroke="#fff" strokeWidth="1.2" fill="none" />
        </svg>
        <svg width="20" height="12" viewBox="0 0 20 12" className="ml-[13px]">
          <rect x=".5" y=".5" width="17" height="11" fill="none" stroke="#fff" />
          <rect x="2" y="2" width="5" height="8" fill="#fff" />
          <rect x="18" y="3.5" width="2" height="5" fill="#fff" />
        </svg>
        <svg width="18" height="16" viewBox="0 0 18 16" className="ml-[12px]">
          <path d="M1 12Q6 3 17 2M5 13Q8 8 14 7M9 14Q10 12 13 11" stroke="#888" fill="none" />
          <circle cx="13" cy="14" r="1.6" fill="#fff" />
        </svg>
        <svg width="22" height="18" viewBox="0 0 22 18" className="ml-[11px]">
          <path d="M1 6H4L9 2V16L4 12H1Z" stroke="#fff" fill="none" />
          <path d="M12 7Q13.5 9 12 11" stroke="#fff" fill="none" />
          <path d="M15 4Q18 9 15 14M18 1Q23 9 18 17" stroke="#888" fill="none" />
        </svg>
        <span className={`${ar} ml-[20px] text-[13px] text-white`}>فا</span>
        <div className="ml-[20px] flex w-[80px] flex-col items-center font-['Open_Sans',sans-serif] text-[14px] leading-[23px] text-white">
          <span>4:00 PM</span>
          <span>12/15/2020</span>
        </div>
        <div className="relative ml-[17px] mr-[31px] h-[18px] w-[20px]">
          <svg width="20" height="18" viewBox="0 0 20 18">
            <path d="M0 0H20V15H9L6 18V15H0Z" fill="#fff" />
            <path d="M3 4H17M3 8H17M3 12H12" stroke="#212121" />
          </svg>
          <div className="absolute left-[9px] top-[8px] flex h-[20px] w-[20px] items-center justify-center rounded-full border border-[#aaa] bg-[#3a3a3a] font-['Open_Sans',sans-serif] text-[13px] font-bold leading-none text-white">3</div>
        </div>
      </div>
    </div>
  );
}

export default function App() {
  return (
    <div className="flex h-[1080px] w-[1920px] flex-col overflow-hidden bg-[#3c3c3c]">
      <TopBar />
      <main className="flex h-[960px] shrink-0 gap-[7px] pl-[6px] pt-[7px]">
        <SharePod />
        <div className="flex w-[471px] shrink-0 flex-col gap-[9px]">
          <Attendees />
          <Chat />
        </div>
      </main>
      <Win10Bar />
    </div>
  );
}
